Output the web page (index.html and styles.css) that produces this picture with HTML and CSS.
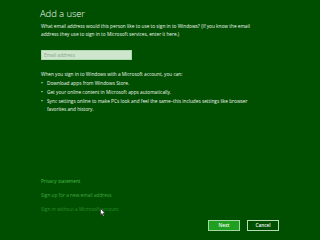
FILE: index.html
```html
<!DOCTYPE html>
<html lang="en">
<head>
<meta charset="utf-8">
<title>Add a user</title>
<link rel="stylesheet" href="styles.css">
</head>
<body>
<main class="page">
  <h1 class="title">Add a user</h1>
  <p class="intro">What email address would this person like to use to sign in to Windows? (If you know the email<br>address they use to sign in to Microsoft services, enter it here.)</p>
  <div class="field">Email address</div>
  <p class="lead">When you sign in to Windows with a Microsoft account, you can:</p>
  <ul class="benefits">
    <li>Download apps from Windows Store.</li>
    <li>Get your online content in Microsoft apps automatically.</li>
    <li>Sync settings online to make PCs look and feel the same–this includes settings like browser<br>favorites and history.</li>
  </ul>
  <nav class="links">
    <a class="link link-bright">Privacy statement</a>
    <a class="link">Sign up for a new email address</a>
    <a class="link link-dim">Sign in without a Microsoft account</a>
  </nav>
  <div class="actions">
    <button class="btn btn-primary">Next</button>
    <button class="btn">Cancel</button>
  </div>
  <svg class="cursor" width="6" height="9" viewBox="0 0 6 9"><path d="M0.5 0.5 L0.5 7 L2 5.6 L3.2 8.3 L4.2 7.9 L3 5.3 L5 5.3 Z" fill="#fff" stroke="#222" stroke-width="0.6"/></svg>
</main>
</body>
</html>
```
FILE: styles.css
```css
html, body {
  margin: 0;
  padding: 0;
  background: #004f00;
}
.page {
  position: relative;
  width: 320px;
  height: 240px;
  box-sizing: border-box;
  padding: 8px 41px 9px 40px;
  display: flex;
  flex-direction: column;
  font-family: "Open Sans", "Liberation Sans", sans-serif;
  color: #eef6ee;
  overflow: hidden;
}
.title {
  margin: 0;
  font-size: 9.5px;
  line-height: 12px;
  font-weight: 300;
  letter-spacing: -0.1px;
  color: #f4faf4;
}
.intro, .lead {
  margin: 2px 0 0 1px;
  font-size: 4.75px;
  line-height: 8px;
  white-space: nowrap;
}
.field {
  margin-top: 12px;
  margin-left: 1px;
  width: 91px;
  height: 10px;
  box-sizing: border-box;
  border: 1px solid #b0d6b0;
  background: #cde6cd;
  color: #88a488;
  font-size: 4.75px;
  line-height: 8px;
  padding-left: 2px;
}
.lead {
  margin-top: 10px;
}
.benefits {
  margin: 0 0 0 1px;
  padding: 0;
  list-style: none;
  font-size: 4.75px;
  line-height: 8px;
  white-space: nowrap;
}
.benefits li {
  position: relative;
  margin-top: 1px;
  padding-left: 6px;
}
.benefits li::before {
  content: "•";
  position: absolute;
  left: 0;
}
.links {
  margin-top: auto;
  margin-left: 1px;
  display: flex;
  flex-direction: column;
  gap: 6px;
  font-size: 4.75px;
  line-height: 8px;
}
.link {
  color: #40a840;
}
.link-bright {
  color: #4cbc4c;
}
.link-dim {
  color: #2f8e2f;
}
.actions {
  margin-top: 7px;
  display: flex;
  justify-content: flex-end;
  gap: 7px;
}
.btn {
  width: 32px;
  height: 11px;
  padding: 0;
  box-sizing: border-box;
  border: 1px solid #b6dcb6;
  background: #004f00;
  color: #f2f8f2;
  font-family: "Open Sans", "Liberation Sans", sans-serif;
  font-size: 4.75px;
  font-weight: 600;
  line-height: 9px;
}
.btn-primary {
  background: #20a020;
  border-color: #a0daa0;
}
.cursor {
  position: absolute;
  left: 100px;
  top: 208px;
}
```
